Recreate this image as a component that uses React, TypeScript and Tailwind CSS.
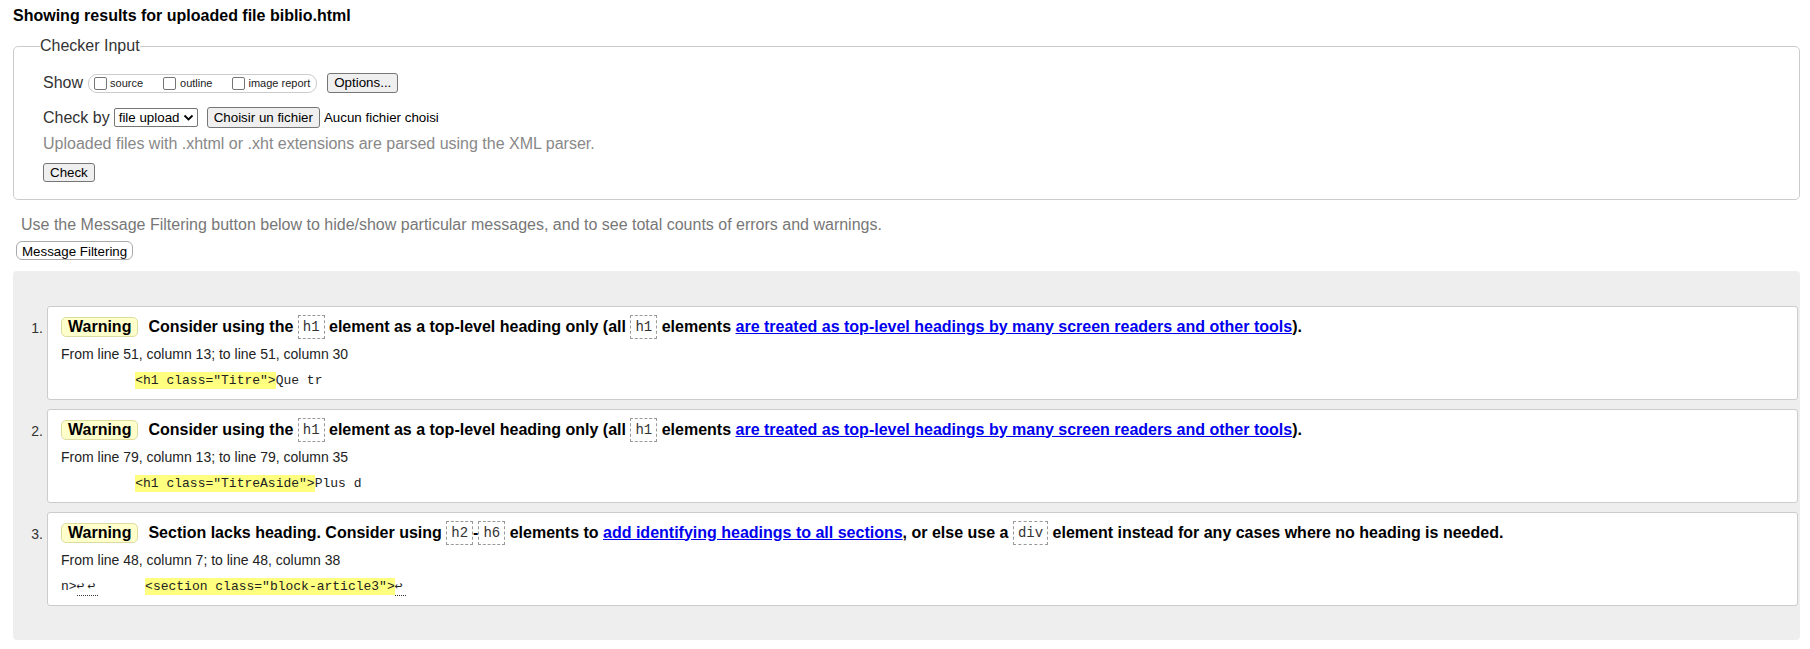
import React from "react";

type Message = {
  heading: React.ReactNode;
  location: string;
  extract: React.ReactNode;
};

const Code = ({ children }: { children: React.ReactNode }) => (
  <code className="inline-block align-middle h-[24px] px-[4px] border border-dashed border-[#999] font-['Liberation_Mono','DejaVu_Sans_Mono',monospace] text-[14px] leading-[22px] font-normal text-[#333]">
    {children}
  </code>
);

const Link = ({ children }: { children: React.ReactNode }) => (
  <a href="#" className="text-[#0000ee] underline">
    {children}
  </a>
);

const Mark = ({ children, className = "" }: { children: React.ReactNode; className?: string }) => (
  <span className={"inline-block bg-[#ffff80] leading-[17px] " + className}>{children}</span>
);

const Lf = ({ children }: { children: React.ReactNode }) => (
  <span className="inline-block leading-[16px] tracking-[3px] border-b border-dotted border-[#333]">
    {children}
  </span>
);

const Checkbox = ({ className = "" }: { className?: string }) => (
  <span
    className={
      "inline-block w-[13px] h-[13px] border border-[#767676] rounded-[2px] bg-white " +
      className
    }
  />
);

const messages: Message[] = [
  {
    heading: (
      <>
        Consider using the <Code>h1</Code> element as a top-level heading only
        (all <Code>h1</Code> elements{" "}
        <Link>
          are treated as top-level headings by many screen readers and other
          tools
        </Link>
        ).
      </>
    ),
    location: "From line 51, column 13; to line 51, column 30",
    extract: (
      <>
        {"         "}
        <Mark className="ml-[4px]">{'<h1 class="Titre">'}</Mark>Que tr
      </>
    ),
  },
  {
    heading: (
      <>
        Consider using the <Code>h1</Code> element as a top-level heading only
        (all <Code>h1</Code> elements{" "}
        <Link>
          are treated as top-level headings by many screen readers and other
          tools
        </Link>
        ).
      </>
    ),
    location: "From line 79, column 13; to line 79, column 35",
    extract: (
      <>
        {"         "}
        <Mark className="ml-[4px]">{'<h1 class="TitreAside">'}</Mark>Plus d
      </>
    ),
  },
  {
    heading: (
      <>
        Section lacks heading. Consider using <Code>h2</Code>-<Code>h6</Code>{" "}
        elements to <Link>add identifying headings to all sections</Link>, or
        else use a <Code>div</Code> element instead for any cases where no
        heading is needed.
      </>
    ),
    location: "From line 48, column 7; to line 48, column 38",
    extract: (
      <>
        {"n>"}
        <Lf>↩↩</Lf>
        {"      "}
        <Mark>{'<section class="block-article3">'}</Mark>
        <Lf>↩</Lf>
      </>
    ),
  },
];

const btn =
  "inline-flex items-center px-[6px] border border-[#767676] rounded-[3px] bg-[#efefef] text-[13.33px] text-black";

export default function App() {
  return (
    <div className="min-h-[649px] bg-white pl-[13px] pr-[10px] pb-[9px] font-['Liberation_Sans',Arial,sans-serif] text-[#222]">
      <h2 className="pt-[7px] text-[16px] font-bold leading-[18px] text-black">
        Showing results for uploaded file biblio.html
      </h2>

      <fieldset className="mt-[12px] border border-[#ccc] rounded-[5px] pl-[29px] pr-[20px] pt-[18px] pb-[15px]">
        <legend className="-ml-[3px] p-0 text-[16px] leading-[18px] text-[#333]">
          Checker Input
        </legend>

        <div className="flex items-center h-[20px] text-[16px] text-[#333]">
          <span>Show</span>
          <span className="ml-[5px] flex items-center h-[19px] border border-[#ccc] rounded-[9px] pl-[5px] pr-[6px] text-[11px] text-[#222]">
            <Checkbox />
            <span className="ml-[3px]">source</span>
            <Checkbox className="ml-[20px]" />
            <span className="ml-[4px]">outline</span>
            <Checkbox className="ml-[20px]" />
            <span className="ml-[3px]">image report</span>
          </span>
          <button className={btn + " ml-[10px] h-[20px]"}>Options...</button>
        </div>

        <div className="mt-[14px] flex items-center h-[21px] text-[16px] text-[#333]">
          <span>Check by</span>
          <span className="ml-[4px] flex items-center justify-between w-[84px] h-[19px] border border-[#767676] rounded-[2px] pl-[4px] pr-[3px] text-[13.33px] text-black">
            file upload
            <svg width="11" height="7" viewBox="0 0 11 7">
              <path d="M1.5 1.5l4 4 4-4" fill="none" stroke="#000" strokeWidth="1.8" />
            </svg>
          </span>
          <button className={btn + " ml-[9px] h-[21px]"}>Choisir un fichier</button>
          <span className="ml-[4px] text-[13.33px] text-black">Aucun fichier choisi</span>
        </div>

        <p className="mt-[7px] text-[16px] leading-[18px] text-[#888]">
          Uploaded files with .xhtml or .xht extensions are parsed using the XML
          parser.
        </p>

        <button className={btn + " mt-[10px] h-[19px]"}>Check</button>
      </fieldset>

      <p className="mt-[16px] pl-[8px] text-[16px] leading-[18px] text-[#777]">
        Use the Message Filtering button below to hide/show particular messages,
        and to see total counts of errors and warnings.
      </p>
      <button className="mt-[7px] ml-[3px] h-[19px] px-[5px] border border-[#aaa] rounded-[6px] bg-white text-[13.33px] text-black">
        Message Filtering
      </button>

      <div className="mt-[8px] bg-[#eee] rounded-[4px] pt-[35px] pb-[34px] pr-[2px]">
        <ol className="flex flex-col gap-[9px]">
          {messages.map((m, i) => (
            <li key={i} className="flex">
              <span className="w-[34px] shrink-0 pr-[4px] mt-[9px] text-right text-[14px] leading-[26px] text-[#333]">
                {i + 1}.
              </span>
              <div className="flex-1 bg-white border border-[#ccc] rounded-[3px] pt-[7px] pb-[8px] px-[13px]">
                <p className="text-[16px] font-bold leading-[26px] text-black whitespace-nowrap">
                  <span className="inline-block align-middle border border-[#dcdca0] bg-[#ffffcc] rounded-[5px] px-[6px] leading-[18px] mr-[10px]">
                    Warning
                  </span>
                  {m.heading}
                </p>
                <p className="mt-[4px] text-[14px] leading-[20px] text-[#222]">
                  {m.location}
                </p>
                <p className="mt-[7px] font-['Liberation_Mono','DejaVu_Sans_Mono',monospace] text-[13px] leading-[20px] whitespace-pre text-[#222]">
                  {m.extract}
                </p>
              </div>
            </li>
          ))}
        </ol>
      </div>
    </div>
  );
}
